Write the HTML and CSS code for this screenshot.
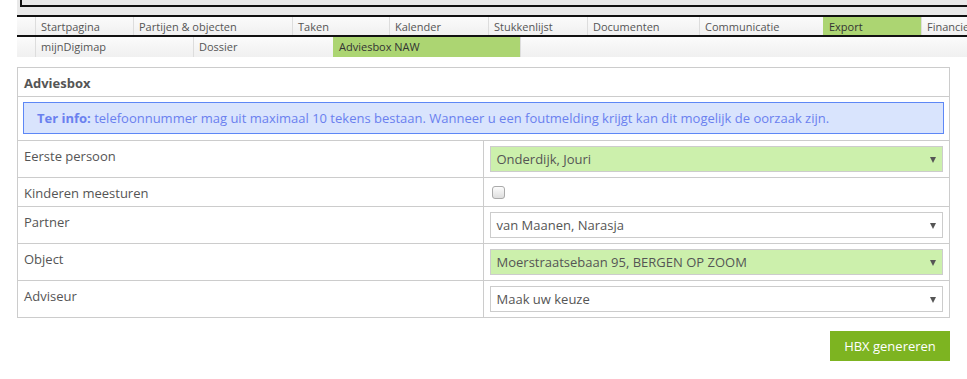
FILE: index.html
```html
<!DOCTYPE html>
<html lang="nl">
<head>
  <meta charset="UTF-8">
  <title>Adviesbox NAW</title>
  <link rel="stylesheet" href="styles.css">
</head>
<body>
  <div class="page">
    <div class="topbar">
      <div class="topbox"></div>
    </div>

    <div class="nav nav-main">
      <div class="nav-item nav-spacer"></div>
      <div class="nav-item w98">Startpagina</div>
      <div class="nav-item w159">Partijen &amp; objecten</div>
      <div class="nav-item w97">Taken</div>
      <div class="nav-item w99">Kalender</div>
      <div class="nav-item w99">Stukkenlijst</div>
      <div class="nav-item w112">Documenten</div>
      <div class="nav-item w124">Communicatie</div>
      <div class="nav-item w98 active">Export</div>
      <div class="nav-item nav-rest">Financieel</div>
    </div>
    <div class="nav nav-sub">
      <div class="nav-item nav-spacer"></div>
      <div class="nav-item w158">mijnDigimap</div>
      <div class="nav-item w140">Dossier</div>
      <div class="nav-item w187 active">Adviesbox NAW</div>
      <div class="nav-item nav-rest"></div>
    </div>

    <div class="panel">
      <div class="panel-heading">Adviesbox</div>
      <div class="panel-body">
        <div class="alert"><strong>Ter info:</strong> telefoonnummer mag uit maximaal 10 tekens bestaan. Wanneer u een foutmelding krijgt kan dit mogelijk de oorzaak zijn.</div>
      </div>
      <table class="form-table">
        <tr>
          <td class="label">Eerste persoon</td>
          <td class="value"><div class="select filled">Onderdijk, Jouri</div></td>
        </tr>
        <tr class="short">
          <td class="label">Kinderen meesturen</td>
          <td class="value"><span class="checkbox"></span></td>
        </tr>
        <tr>
          <td class="label">Partner</td>
          <td class="value"><div class="select">van Maanen, Narasja</div></td>
        </tr>
        <tr>
          <td class="label">Object</td>
          <td class="value"><div class="select filled">Moerstraatsebaan 95, BERGEN OP ZOOM</div></td>
        </tr>
        <tr>
          <td class="label">Adviseur</td>
          <td class="value"><div class="select">Maak uw keuze</div></td>
        </tr>
      </table>
    </div>

    <div class="actions">
      <button class="btn-generate">HBX genereren</button>
    </div>
  </div>
</body>
</html>
```

FILE: styles.css
```css
* { margin: 0; padding: 0; box-sizing: border-box; }
html, body {
  background: #fff;
  font-family: 'Open Sans', sans-serif;
  color: #555;
  overflow: hidden;
}
.page {
  padding-left: 17px;
}
.topbar {
  height: 15px;
  background: #e9e9e9;
  padding-left: 3px;
}
.topbox {
  height: 7px;
  border: 2px solid #111;
  border-top: none;
  border-right: none;
  background: #e9e9e9;
}
.nav {
  display: flex;
  height: 20px;
  font-size: 11px;
  background: linear-gradient(#fbfbfb, #f0f0f0);
  white-space: nowrap;
  overflow: hidden;
}
.nav-main {
  border-top: 2px solid #111;
  border-bottom: 2px solid #111;
  height: 22px;
}
.nav-item {
  flex: none;
  padding: 1px 5px 0;
  border-left: 1px solid #ddd;
  line-height: 17px;
}
.nav-spacer { width: 18px; border-left: none; }
.nav-rest { flex: 1; }
.nav-item.active {
  background: #acd572;
  color: #333;
  border-left-color: #acd572;
}
.w97 { width: 97px; }
.w98 { width: 98px; }
.w99 { width: 99px; }
.w112 { width: 112px; }
.w124 { width: 124px; }
.w140 { width: 140px; }
.w158 { width: 158px; }
.w159 { width: 159px; }
.w187 { width: 187px; }

.panel {
  margin-top: 10px;
  width: 933px;
  border: 1px solid #ccc;
  border-bottom: none;
}
.panel-heading {
  height: 29px;
  padding: 6px 6px 0;
  font-size: 13px;
  font-weight: bold;
  border-bottom: 1px solid #ccc;
}
.panel-body {
  padding: 5px 5px 6px;
}
.alert {
  height: 32px;
  padding: 6px 13px 0;
  background: #d9e4fd;
  border: 1px solid #5d87f6;
  color: #6a80ef;
  font-size: 13px;
}
.form-table {
  width: 100%;
  border-collapse: collapse;
  font-size: 13px;
}
.form-table td {
  border-top: 1px solid #ccc;
  border-bottom: 1px solid #ccc;
  vertical-align: top;
  height: 37px;
}
.form-table tr.short td { height: 29px; }
.label {
  width: 465px;
  padding: 6px 6px 0;
  border-right: 1px solid #ccc;
}
.value {
  padding: 5px 6px 0;
}
.select {
  position: relative;
  height: 26px;
  border: 1px solid #ccc;
  background: #fff;
  padding: 3px 6px 0;
  line-height: 18px;
}
.select.filled { background: #ccf0ac; }
.select::after {
  content: "";
  position: absolute;
  right: 6px;
  top: 10px;
  border-left: 3px solid transparent;
  border-right: 3px solid transparent;
  border-top: 6px solid #555;
}
.checkbox {
  display: block;
  width: 13px;
  height: 13px;
  margin: 3px 0 0 2px;
  border: 1px solid #aaa;
  border-radius: 3px;
  background: linear-gradient(#fcfcfc, #dedede);
}
.actions {
  display: flex;
  justify-content: flex-end;
  width: 933px;
  margin-top: 13px;
}
.btn-generate {
  width: 120px;
  height: 30px;
  background: #7db421;
  border: none;
  color: #fff;
  font-family: 'Open Sans', sans-serif;
  font-size: 13px;
}
```
